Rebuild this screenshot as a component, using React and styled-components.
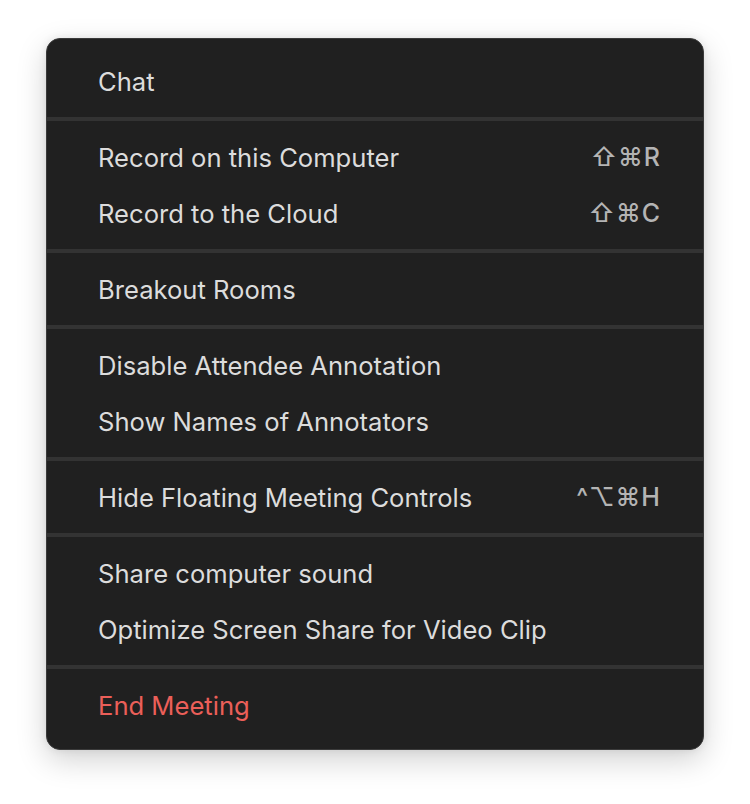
import React from "react";
import styled, { createGlobalStyle } from "styled-components";

const GlobalStyle = createGlobalStyle`
  html, body {
    margin: 0;
    padding: 0;
    background: #ffffff;
  }
  body {
    font-family: "Inter", "Noto Sans", sans-serif;
  }
`;

const Page = styled.div`
  width: 750px;
  height: 804px;
  padding: 38px 46px 0 46px;
  box-sizing: border-box;
`;

const Menu = styled.div`
  width: 658px;
  box-sizing: border-box;
  background: #202020;
  border: 1px solid #3a3a3a;
  border-radius: 14px;
  padding: 14px 0 16px;
  box-shadow: 0 10px 30px rgba(0, 0, 0, 0.18), 0 0 8px rgba(0, 0, 0, 0.08);
  display: flex;
  flex-direction: column;
`;

const Item = styled.div`
  height: 56px;
  display: flex;
  align-items: center;
  justify-content: space-between;
  padding: 0 42px 0 51px;
  font-size: 25.6px;
  color: ${(p) => (p.$danger ? "#eb5f59" : "#dcdcdc")};
`;

const Shortcut = styled.span`
  color: #b4b4b4;
  font-size: 25px;
  font-weight: 500;
  letter-spacing: 1px;
`;

const Separator = styled.div`
  height: 4px;
  background: #333333;
  margin: 8px 0 8px;
`;

const groups = [
  [{ label: "Chat" }],
  [
    { label: "Record on this Computer", keys: "⇧⌘R" },
    { label: "Record to the Cloud", keys: "⇧⌘C" },
  ],
  [{ label: "Breakout Rooms" }],
  [
    { label: "Disable Attendee Annotation" },
    { label: "Show Names of Annotators" },
  ],
  [{ label: "Hide Floating Meeting Controls", keys: "^⌥⌘H" }],
  [
    { label: "Share computer sound" },
    { label: "Optimize Screen Share for Video Clip" },
  ],
  [{ label: "End Meeting", danger: true }],
];

const App = () => {
  return (
    <>
      <GlobalStyle />
      <Page>
        <Menu>
          {groups.map((group, gi) => (
            <React.Fragment key={gi}>
              {gi > 0 && <Separator />}
              {group.map((item) => (
                <Item key={item.label} $danger={item.danger}>
                  <span>{item.label}</span>
                  {item.keys && <Shortcut>{item.keys}</Shortcut>}
                </Item>
              ))}
            </React.Fragment>
          ))}
        </Menu>
      </Page>
    </>
  );
};

export default App;
